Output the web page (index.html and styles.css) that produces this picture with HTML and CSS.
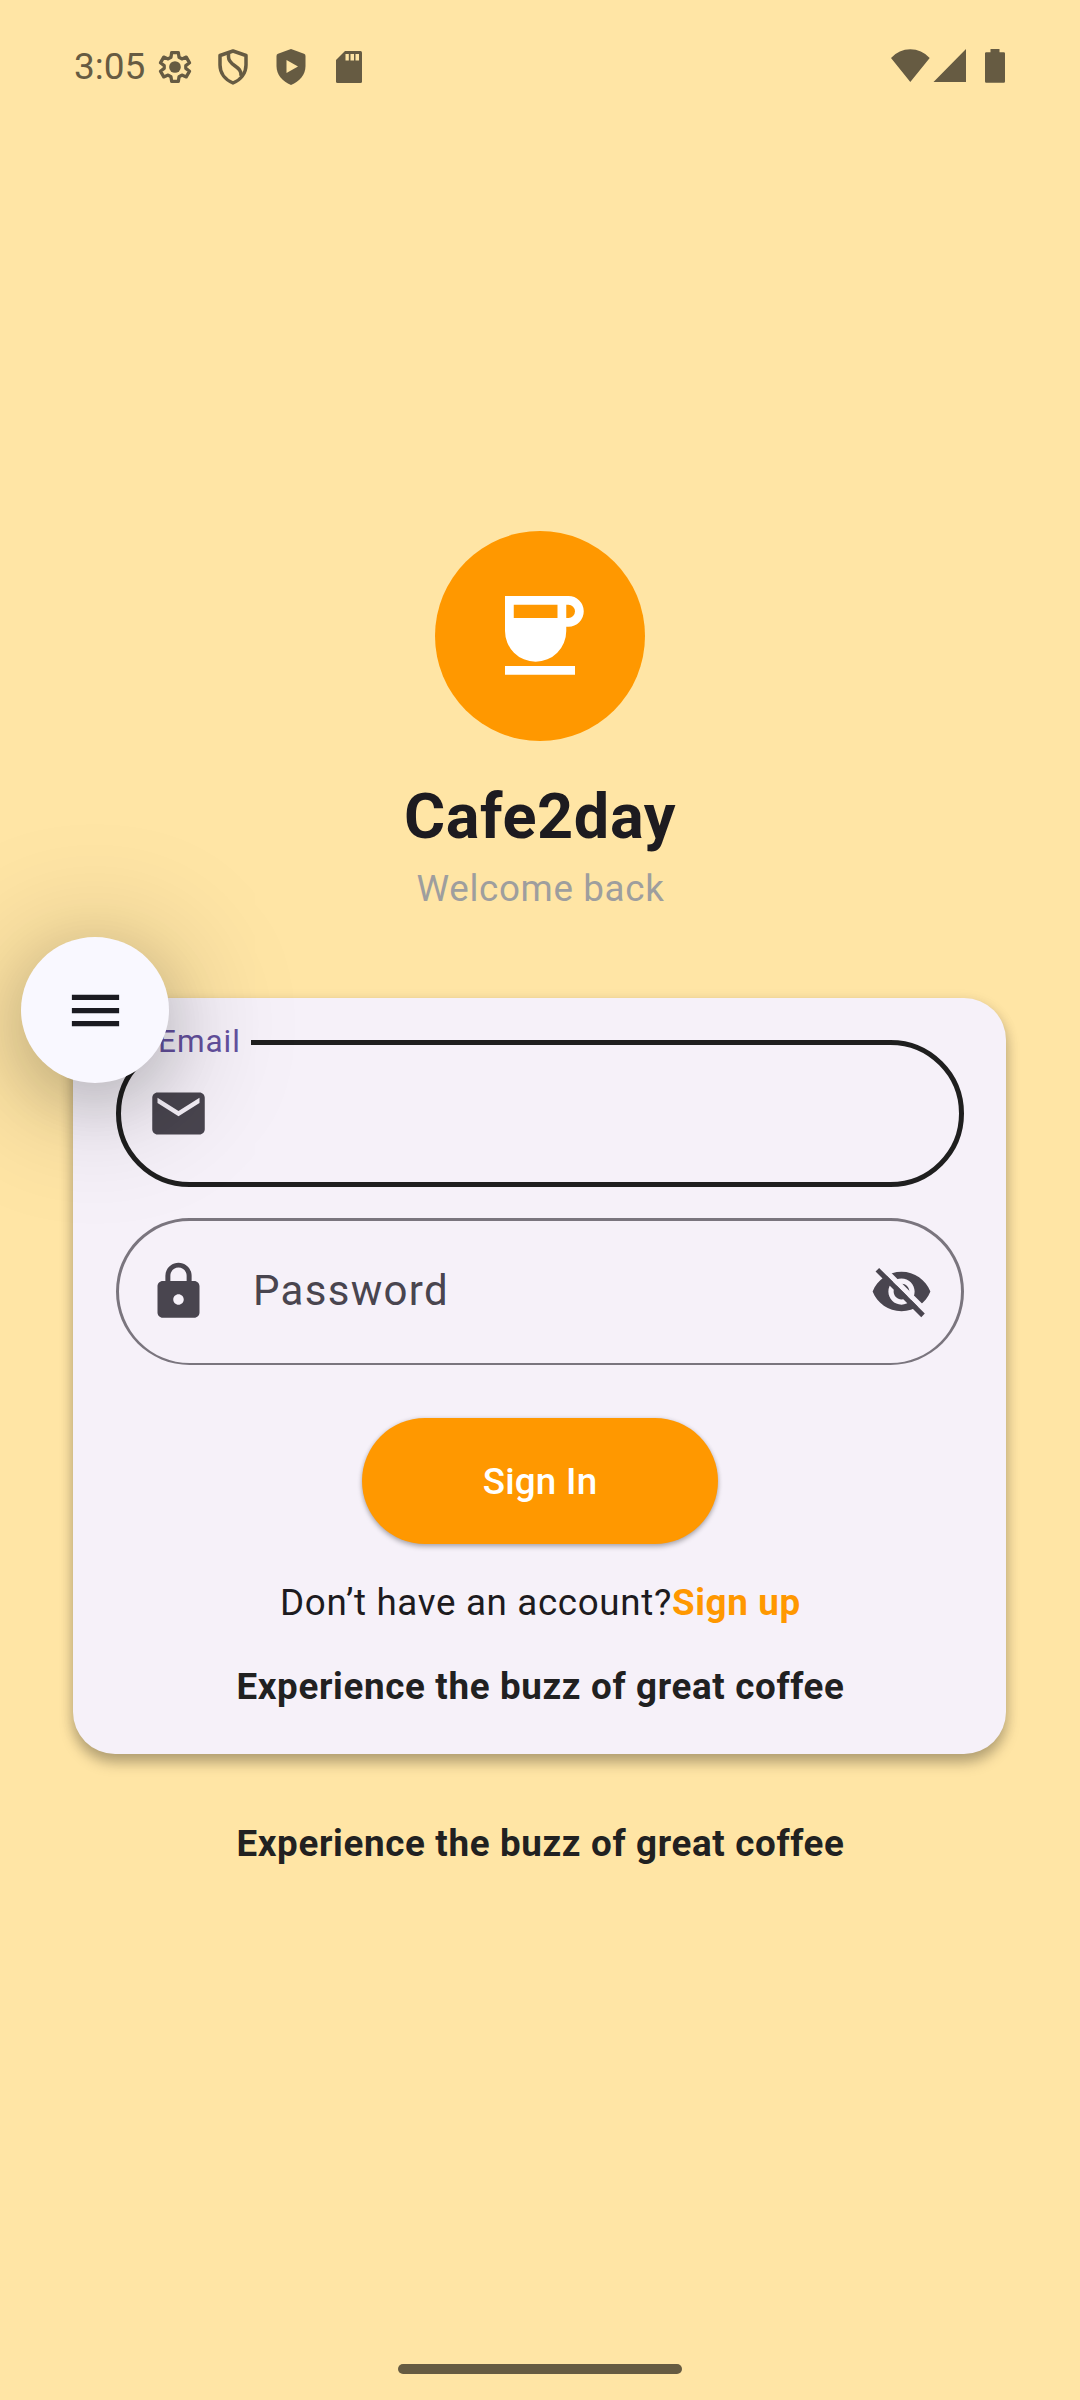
FILE: index.html
```
<!DOCTYPE html>
<html lang="en">
<head>
<meta charset="utf-8">
<title>Cafe2day</title>
<link rel="stylesheet" href="styles.css">
</head>
<body>
<div class="screen">
  <header class="status">
    <div class="status-left">
      <span class="clock">3:05</span>
      <svg class="gear" viewBox="0 0 24 24"><path d="M9.800 2.400h4.400l.5 3.100 1.900 1.100 2.900-1.200 2.200 3.800-2.500 1.900v1.800l2.500 1.900-2.200 3.800-2.900-1.200-1.900 1.100-.5 3.100H9.800l-.5-3.100-1.900-1.100-2.900 1.200-2.200-3.800 2.500-1.900v-1.800L2.300 9.200l2.200-3.800 2.900 1.200 1.900-1.100z" fill="none" stroke="currentColor" stroke-width="2.200" stroke-linejoin="round"/><circle cx="12" cy="12" r="3.900" fill="currentColor"/></svg>
      <svg class="shield" viewBox="0 0 30 36"><path d="M15 2 28 6.500V16c0 8.500-5.500 15-13 18C7.500 31 2 24.500 2 16V6.500z" fill="none" stroke="currentColor" stroke-width="3.500" stroke-linejoin="round"/><path d="M10.500 4v4c0 9 14 9 12.500 19" fill="none" stroke="currentColor" stroke-width="3.500"/></svg>
      <svg class="play-shield" viewBox="0 0 30 36"><path d="M15 0 28 4.800Q29.500 5.400 29.500 7V17c0 9-6 15.500-14.500 19C6.500 32.500.5 26 .5 17V7Q.5 5.400 2 4.800z" fill="currentColor"/><path d="M10.500 11v13L22 17.500z" fill="#ffe5a5"/></svg>
      <svg class="sd" viewBox="0 0 26 32"><path d="M9 0h15.500Q26 0 26 1.500v29q0 1.500-1.500 1.500h-23Q0 32 0 30.500V9z" fill="currentColor"/><path d="M9.500 3h3.300v6.500H9.500zM14.500 3h3.500v6.500h-3.500zM19.500 3H23v6.500h-3.500z" fill="#ffe5a5"/></svg>
    </div>
    <svg class="signals" viewBox="0 0 114 34"><path d="M0 9Q8 .3 19.300.3T38.700 9L19.300 33zM42.500 33 75 0v33zM94 4.500q0-1.200 1.200-1.200h4.300V0h9v3.300h4.300q1.200 0 1.200 1.200v28q0 1.200-1.200 1.200H95.200q-1.200 0-1.200-1.200z" fill="currentColor"/></svg>
  </header>

  <main class="content">
    <div class="logo">
      <svg viewBox="0 0 18 18"><path fill-rule="evenodd" d="M0 0h14.500a3.500 3.500 0 0 1 0 7H14v1A7 7 0 0 1 0 8zM2 2v3h10V2zM14 2v3h.5a1.500 1.500 0 0 0 0-3zM0 16h16v2H0z" fill="#fff"/></svg>
    </div>
    <h1 class="title">Cafe2day</h1>
    <p class="subtitle">Welcome back</p>

    <section class="card">
      <div class="field field-email">
        <span class="label">Email</span>
        <svg class="icon" viewBox="0 0 24 24"><path d="M20 4H4c-1.100 0-1.990.9-1.990 2L2 18c0 1.100.9 2 2 2h16c1.100 0 2-.9 2-2V6c0-1.100-.9-2-2-2zm0 4-8 5-8-5V6l8 5 8-5v2z"/></svg>
      </div>
      <div class="field field-password">
        <svg class="icon" viewBox="0 0 24 24"><path d="M18 8h-1V6c0-2.760-2.240-5-5-5S7 3.240 7 6v2H6c-1.100 0-2 .9-2 2v10c0 1.100.9 2 2 2h12c1.100 0 2-.9 2-2V10c0-1.100-.9-2-2-2zm-6 9c-1.100 0-2-.9-2-2s.9-2 2-2 2 .9 2 2-.9 2-2 2zm3.100-9H8.900V6c0-1.710 1.390-3.100 3.100-3.100 1.710 0 3.100 1.390 3.100 3.100v2z"/></svg>
        <span class="placeholder">Password</span>
        <svg class="icon" viewBox="0 0 24 24"><path d="M12 4.500C7 4.500 2.730 7.610 1 12c1.730 4.390 6 7.500 11 7.500s9.270-3.110 11-7.500c-1.730-4.390-6-7.500-11-7.500zM12 17c-2.760 0-5-2.240-5-5s2.240-5 5-5 5 2.240 5 5-2.240 5-5 5zm0-8c-1.660 0-3 1.340-3 3s1.340 3 3 3 3-1.340 3-3-1.340-3-3-3z"/><path d="M4.600 2.800 21.600 19.800" stroke="#f6f1f9" stroke-width="2"/><path d="M2.800 3.700 20.200 21.100" stroke="#49454f" stroke-width="1.900"/></svg>
      </div>
      <button class="button">Sign In</button>
      <p class="signup">Don’t have an account?<a>Sign up</a></p>
      <p class="tagline tagline-card">Experience the buzz of great coffee</p>
    </section>
    <p class="tagline">Experience the buzz of great coffee</p>
  </main>
  <div class="home-bar"></div>
  <div class="fab"><svg viewBox="0 0 24 24"><path d="M3 18h18v-2H3v2zm0-5h18v-2H3v2zm0-7v2h18V6H3z" fill="#1b1b21"/></svg></div>
</div>
</body>
</html>
```
FILE: styles.css
```
* { box-sizing: border-box; }
body { margin: 0; font-family: Roboto, sans-serif; background: #ffe5a5; }
h1, p { margin: 0; white-space: nowrap; }
svg { display: block; flex: none; }
.screen { position: relative; display: flex; flex-direction: column; width: 1080px; height: 2400px; overflow: hidden; background: #ffe5a5; }
.status { display: flex; justify-content: space-between; height: 132px; padding: 49px 75px 0 74px; color: #665b42; }
.status-left { display: flex; }
.clock { width: 83px; margin-top: -4px; font-size: 37px; line-height: 44px; letter-spacing: 0; }
.gear { width: 36px; height: 36px; }
.shield { width: 30px; height: 36px; margin-left: 25px; }
.play-shield { width: 30px; height: 36px; margin-left: 28px; }
.sd { width: 26px; height: 32px; margin: 2px 0 0 30px; }
.signals { width: 114px; height: 34px; }
.content { flex: 1; display: flex; flex-direction: column; align-items: center; padding-top: 399px; }
.logo { display: flex; width: 210px; height: 210px; padding: 65px 0 0 70px; border-radius: 50%; background: #ff9800; }
.logo svg { width: 78.750px; height: 78.750px; }
.title { margin-top: 34px; font-size: 63px; line-height: 84px; font-weight: 700; color: #1d1b20; letter-spacing: .6px; }
.subtitle { margin-top: 3px; padding-left: 1px; font-size: 36.750px; line-height: 53px; letter-spacing: .66px; color: #9e9e9e; }
.card { display: flex; flex-direction: column; align-items: center; width: 933px; height: 756px; margin: 83px 1px 0 0; padding-top: 42px; border-radius: 42px; background: #f6f1f9; box-shadow: 0 9px 14px rgba(0,0,0,.25), 0 3px 14px rgba(0,0,0,.1); }
.field { position: relative; display: flex; align-items: center; width: 848px; height: 147px; margin-left: 1px; border-radius: 73.500px; }
.field-email { border: 5px solid #1f1f1f; padding-left: 26px; }
.field-password { margin-top: 31px; border: 3px solid #7a757e; border-bottom-width: 2px; padding: 0 28px 2px; }
.label { position: absolute; left: 28px; top: -24px; padding: 0 10px 0 9px; background: #f6f1f9; color: #65519f; font-size: 31.500px; line-height: 42px; letter-spacing: .98px; }
.icon { width: 63px; height: 63px; fill: #49454f; }
.placeholder { flex: 1; margin: -1px 0 0 43px; font-size: 42px; line-height: 63px; letter-spacing: 1.310px; color: #49454f; }
.button { width: 356px; height: 126px; margin: 53px 0 0 1px; padding: 0; border: 0; border-radius: 63px; background: #ff9800; color: #fff; font: 500 36.750px/53px Roboto, sans-serif; letter-spacing: .26px; box-shadow: 0 3px 5px rgba(0,0,0,.25), 0 0 4px rgba(0,0,0,.12); }
.signup { margin-top: 32px; padding-left: 2px; font-size: 36.750px; line-height: 53px; letter-spacing: .66px; color: #1d1b20; }
.signup a { font-weight: 700; color: #ff9800; }
.tagline { margin-top: 63px; padding-left: 1px; font-size: 36.750px; line-height: 53px; font-weight: 700; letter-spacing: .66px; color: #212121; }
.tagline-card { margin-top: 31px; padding-left: 2px; }
.home-bar { align-self: center; width: 284px; height: 10px; margin-bottom: 26px; border-radius: 5px; background: #665b42; }
.fab { position: absolute; left: 21px; top: 937px; display: flex; align-items: center; justify-content: center; width: 148px; height: 146px; border-radius: 50%; background: #f9f8ff; box-shadow: 0 18px 60px rgba(0,0,0,.14), 0 14px 130px 10px rgba(0,0,0,.22); }
.fab svg { width: 63px; height: 63px; }
```
